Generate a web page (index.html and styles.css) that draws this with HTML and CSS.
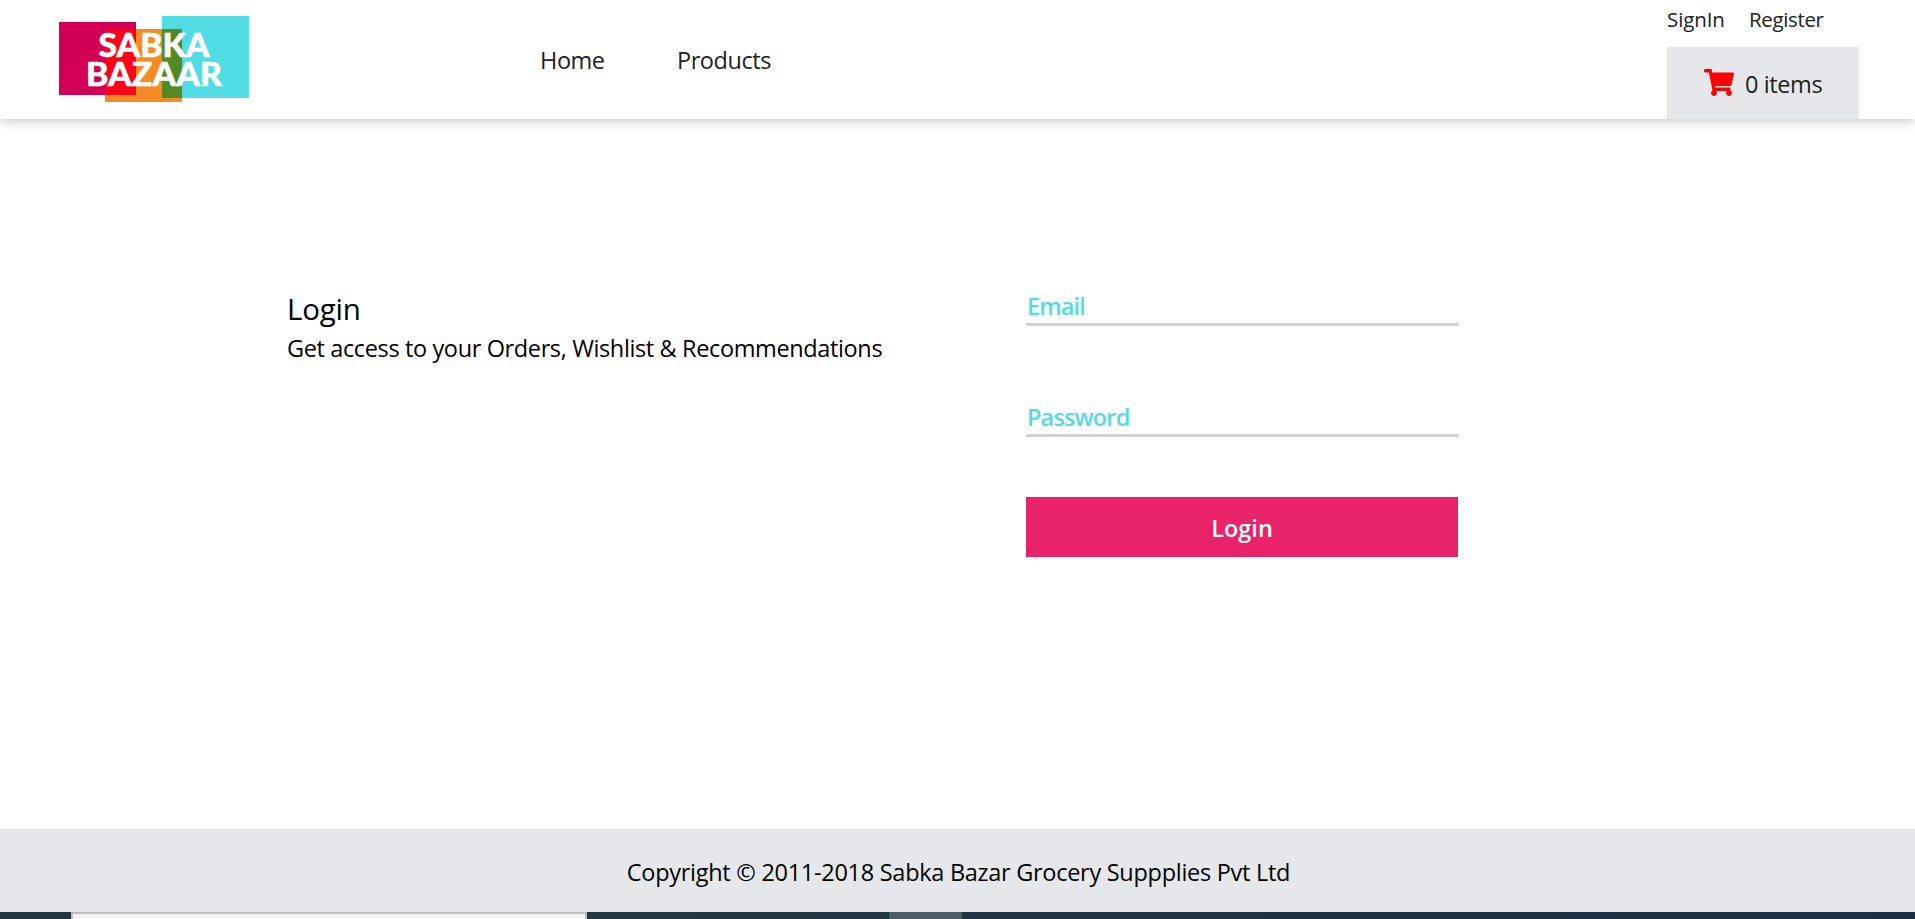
FILE: index.html
```html
<!DOCTYPE html>
<html lang="en">
<head>
<meta charset="utf-8">
<title>Sabka Bazaar</title>
<link rel="stylesheet" href="styles.css">
</head>
<body>
<header class="header">
  <svg class="logo" width="190" height="86" viewBox="0 0 190 86" role="img" aria-label="Sabka Bazaar">
    <rect x="0" y="6" width="77" height="73" fill="#d10056"/>
    <rect x="46" y="13" width="77" height="73" fill="#f68b24"/>
    <rect x="46" y="13" width="31" height="66" fill="#ff0018"/>
    <rect x="103" y="0" width="87" height="82" fill="#51dce4"/>
    <rect x="103" y="13" width="20" height="69" fill="#538a24"/>
    <text class="logo-text" x="39.5" y="41" textLength="111" lengthAdjust="spacingAndGlyphs">SABKA</text>
    <text class="logo-text" x="27" y="70" textLength="136" lengthAdjust="spacingAndGlyphs">BAZAAR</text>
  </svg>
  <nav class="nav">
    <a class="nav-link home">Home</a>
    <a class="nav-link products">Products</a>
  </nav>
  <div class="account">
    <div class="auth">
      <a class="signin">SignIn</a>
      <a class="register">Register</a>
    </div>
    <div class="cart">
      <svg class="cart-icon" width="30" height="27" viewBox="0 0 576 512" preserveAspectRatio="none"><path fill="red" d="M528.12 301.319l47.273-208C578.806 78.301 567.391 64 551.99 64H159.208l-9.166-44.81C147.758 8.021 137.93 0 126.529 0H24C10.745 0 0 10.745 0 24v16c0 13.255 10.745 24 24 24h69.883l70.248 343.435C147.325 417.1 136 435.222 136 456c0 30.928 25.072 56 56 56s56-25.072 56-56c0-15.674-6.447-29.835-16.824-40h209.647C430.447 426.165 424 440.326 424 456c0 30.928 25.072 56 56 56s56-25.072 56-56c0-22.172-12.888-41.332-31.579-50.405l5.517-24.276c3.413-15.018-8.002-29.319-23.403-29.319H218.117l-6.545-32h293.145c11.206 0 20.92-7.754 23.403-18.681z"/></svg>
      <span class="cart-count">0 items</span>
    </div>
  </div>
</header>
<main class="main">
  <section class="intro">
    <h1 class="title">Login</h1>
    <p class="subtitle">Get access to your Orders, Wishlist &amp; Recommendations</p>
  </section>
  <form class="form">
    <div class="field"><label class="email">Email</label></div>
    <div class="field"><label class="password">Password</label></div>
    <button class="submit" type="button"><span>Login</span></button>
  </form>
</main>
<footer class="footer"><span>Copyright © 2011-2018 Sabka Bazar Grocery Suppplies Pvt Ltd</span></footer>
<div class="taskbar">
  <div class="search"></div>
  <div class="task"></div>
</div>
</body>
</html>
```

FILE: styles.css
```css
* { box-sizing: border-box; }
body {
  margin: 0;
  height: 919px;
  overflow: hidden;
  display: flex;
  flex-direction: column;
  background: #fff;
  color: #000;
  font-family: "Open Sans", "Noto Sans", sans-serif;
  font-size: 23.5px;
  line-height: 36px;
}
.header {
  display: flex;
  height: 119px;
  padding: 0 56px 0 59px;
  box-shadow: 0 3px 10px rgba(0, 0, 0, .2);
  color: #212121;
}
.logo { margin-top: 16px; }
.logo-text { font: 900 32px Lato, sans-serif; fill: #fff; stroke: #fff; stroke-width: .5px; }
.nav { display: flex; margin: 42px 0 0 291px; letter-spacing: -.45px; }
.nav-link { white-space: nowrap; }
.home { width: 137px; }
.account { width: 192px; margin-left: auto; }
.auth {
  display: flex;
  height: 47px;
  font-size: 20.5px;
  line-height: 38px;
}
.signin { width: 82px; letter-spacing: -.1px; }
.register { letter-spacing: -.35px; }
.cart {
  display: flex;
  height: 72px;
  padding: 22px 0 0 37px;
  background: #e5e7eb;
}
.cart-count { margin: -3px 0 0 11px; white-space: nowrap; letter-spacing: -.4px; }
.main {
  display: flex;
  height: 710px;
  padding: 172px 0 0 287px;
}
.intro { width: 739px; }
.title { margin: -2px 0 0; font-size: 29.5px; line-height: 39px; font-weight: 400; letter-spacing: -.2px; }
.subtitle { margin: 0; line-height: 40px; white-space: nowrap; letter-spacing: -.37px; }
.form { width: 432px; }
.field {
  height: 35px;
  margin-bottom: 76px;
  padding-left: 1px;
  border-bottom: 3px solid #d3d3d3;
  color: #51dce4;
  font-weight: 600;
  line-height: 30px;
  letter-spacing: -.85px;
}
.field + .field { margin-bottom: 60px; }
.submit {
  display: block;
  width: 432px;
  height: 60px;
  padding: 1px 0 0;
  border: 0;
  background: #e82369;
  color: #fff;
  font: 600 23.5px/36px "Open Sans", "Noto Sans", sans-serif;
}
.footer {
  height: 83px;
  padding: 25px 0 0 2px;
  background: #e5e7eb;
  text-align: center;
  letter-spacing: -.28px;
}
.taskbar {
  display: flex;
  height: 7px;
  background: linear-gradient(90deg, #21363f, #21383f 35%, #203443 50%, #1c2f40);
}
.search {
  width: 516px;
  margin-left: 71px;
  border: 2px solid #bebebe;
  border-bottom: 0;
  background: #f3f3f3;
}
.task { width: 73px; margin-left: 302px; background: #4e5e66; }
```
